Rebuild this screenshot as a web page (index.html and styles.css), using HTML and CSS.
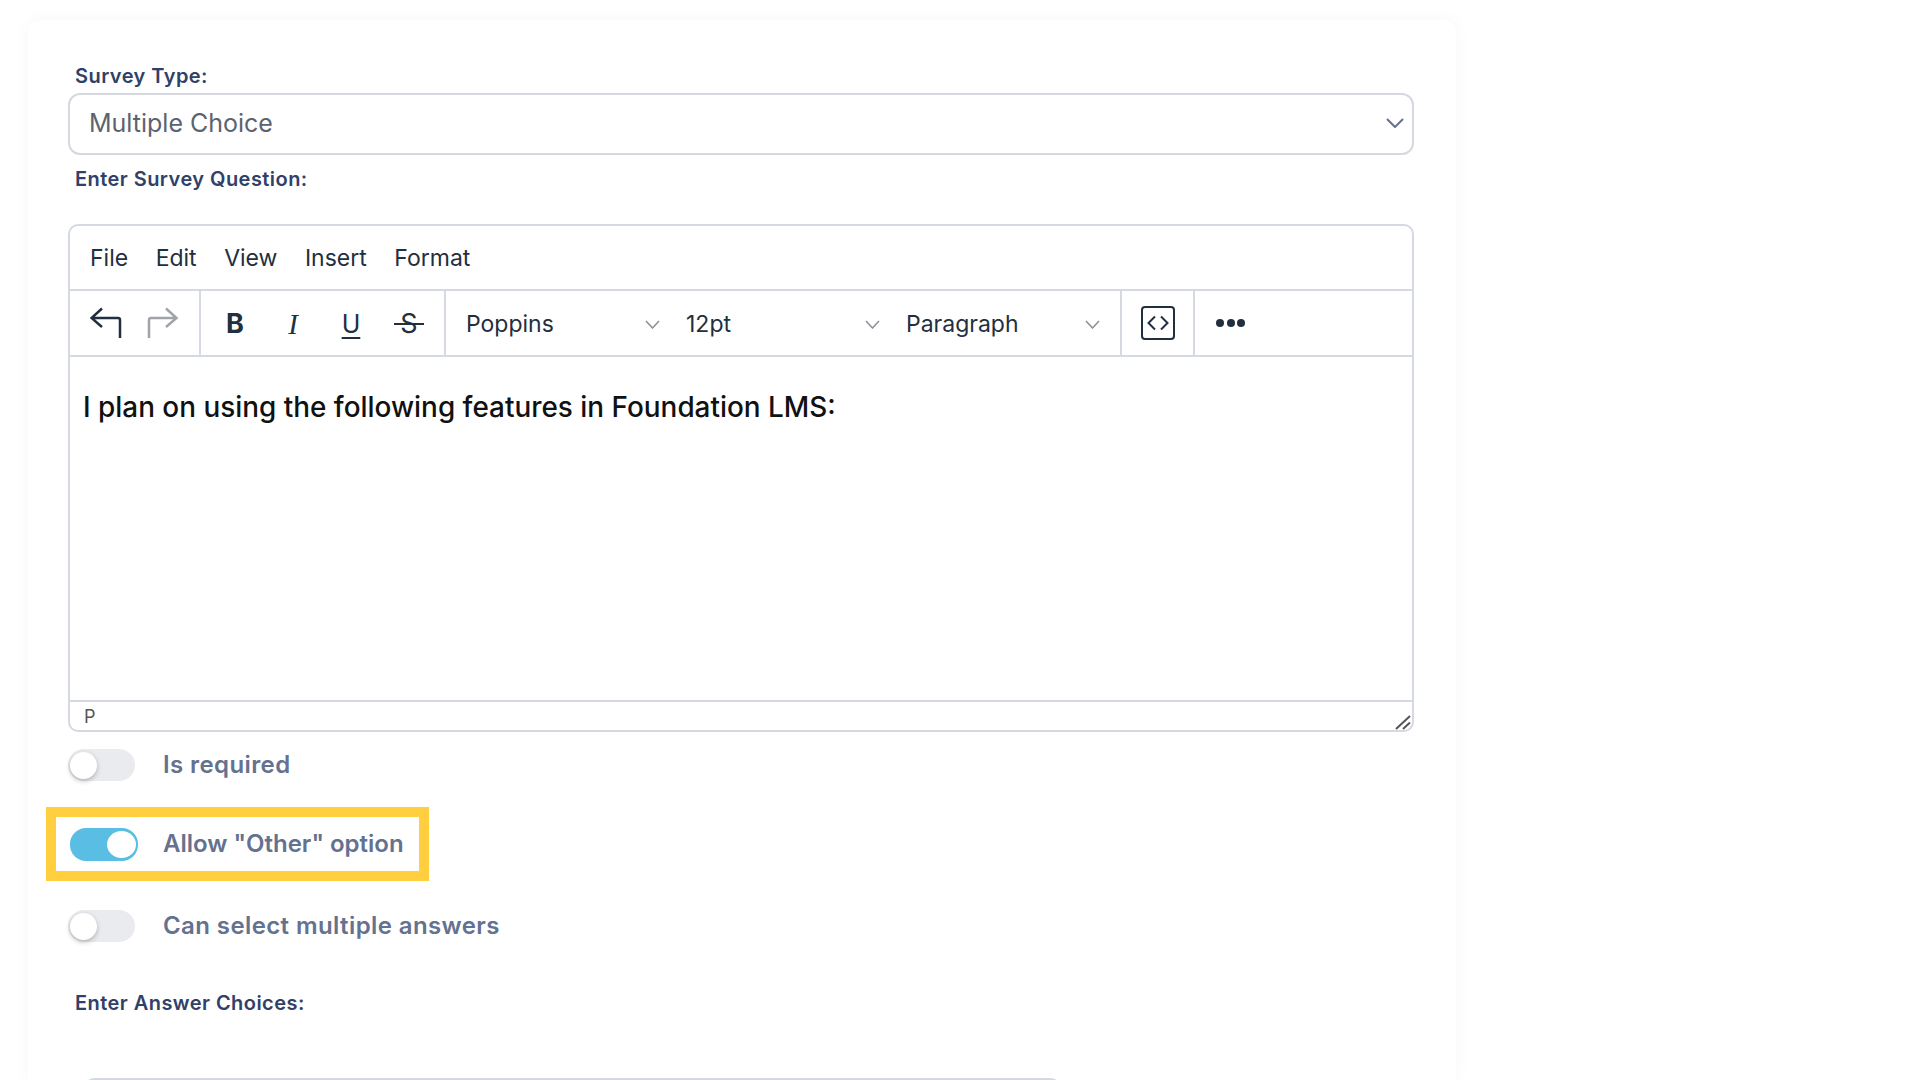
FILE: index.html
```html
<!DOCTYPE html>
<html lang="en">
<head>
  <meta charset="UTF-8">
  <meta name="viewport" content="width=device-width, initial-scale=1.0">
  <title>Survey Question</title>
  <link rel="stylesheet" href="styles.css">
</head>
<body>
  <div class="card">
    <div class="field-label">Survey Type:</div>
    <div class="select-box">
      <span>Multiple Choice</span>
      <svg class="select-chevron" width="18" height="10" viewBox="0 0 18 10"><path d="M1 1l8 8 8-8"/></svg>
    </div>

    <div class="field-label question-label">Enter Survey Question:</div>
    <div class="editor">
      <div class="menu-bar">
        <span>File</span>
        <span>Edit</span>
        <span>View</span>
        <span>Insert</span>
        <span>Format</span>
      </div>
      <div class="tool-bar">
        <div class="tool-group history-group">
          <svg class="tool-icon" width="32" height="32" viewBox="0 0 32 32"><path d="M12 1.5L1.5 11 12 20M1.5 11H28a2 2 0 0 1 2 2v18"/></svg>
          <svg class="tool-icon disabled" width="32" height="32" viewBox="0 0 32 32"><path d="M19 1.5L29.5 11 19 20M29.5 11H4a2 2 0 0 0-2 2v18"/></svg>
        </div>
        <div class="tool-group format-group">
          <span class="format-btn bold">B</span>
          <span class="format-btn italic">I</span>
          <span class="format-btn under">U</span>
          <span class="format-btn strike">S</span>
        </div>
        <div class="tool-group font-group">
          <div class="tool-select">
            <span>Poppins</span>
            <svg width="15" height="9" viewBox="0 0 15 9"><path d="M1 1l6.500 7L14 1"/></svg>
          </div>
          <div class="tool-select">
            <span>12pt</span>
            <svg width="15" height="9" viewBox="0 0 15 9"><path d="M1 1l6.500 7L14 1"/></svg>
          </div>
          <div class="tool-select">
            <span>Paragraph</span>
            <svg width="15" height="9" viewBox="0 0 15 9"><path d="M1 1l6.500 7L14 1"/></svg>
          </div>
        </div>
        <div class="tool-group code-group">
          <svg class="tool-icon" width="34" height="34" viewBox="0 0 34 34"><rect x="1" y="1" width="32" height="32" rx="3"/><path d="M14 10.500L7.500 17l6.500 6.500M20 10.500l6.500 6.500-6.500 6.500"/></svg>
        </div>
        <div class="tool-group more-group">
          <i class="dot"></i><i class="dot"></i><i class="dot"></i>
        </div>
      </div>
      <div class="editor-body">I plan on using the following features in Foundation LMS:</div>
      <div class="status-bar">
        <span>P</span>
        <svg class="resize-grip" width="16" height="15" viewBox="0 0 16 15"><path d="M1 14L15 1M8 14l7-6.500"/></svg>
      </div>
    </div>

    <div class="toggle-row first-row">
      <span class="toggle"><i class="thumb"></i></span>
      <span class="toggle-text">Is required</span>
    </div>
    <div class="toggle-row marked-row">
      <span class="toggle on"><i class="thumb"></i></span>
      <span class="toggle-text">Allow "Other" option</span>
      <div class="highlight"></div>
    </div>
    <div class="toggle-row last-row">
      <span class="toggle"><i class="thumb"></i></span>
      <span class="toggle-text">Can select multiple answers</span>
    </div>

    <div class="field-label answers-label">Enter Answer Choices:</div>
    <div class="answer-box"></div>
  </div>
</body>
</html>
```

FILE: styles.css
```css
/* General Styles */
html, body {
  height: 1080px;
  overflow: hidden;
}

body {
  margin: 0;
  background: #fff;
  font-family: 'Inter', 'Noto Sans', sans-serif;
}

/* Card */
.card {
  width: 1428px;
  height: 1060px;
  margin: 20px 0 0 28px;
  padding: 41px 0 0 40px;
  box-sizing: border-box;
  overflow: hidden;
  background: #fff;
  border-radius: 12px 12px 0 0;
  box-shadow: 0 0 18px rgba(0, 0, 0, 0.035);
}

.field-label {
  height: 30px;
  line-height: 30px;
  margin-left: 7px;
  font-size: 20px;
  font-weight: 600;
  letter-spacing: 0.45px;
  color: #2f4168;
}

.question-label {
  margin-top: 9px;
}

.answers-label {
  margin-top: 45px;
}

/* Survey type select */
.select-box {
  display: flex;
  align-items: center;
  justify-content: space-between;
  width: 1346px;
  height: 62px;
  margin-top: 2px;
  padding: 0 8px 2px 19px;
  box-sizing: border-box;
  border: 2px solid #d5d8de;
  border-radius: 12px;
  font-size: 25px;
  color: #5c6370;
}

.select-chevron path {
  fill: none;
  stroke: #64718f;
  stroke-width: 2;
}

/* Editor */
.editor {
  width: 1346px;
  height: 508px;
  margin-top: 30px;
  box-sizing: border-box;
  border: 2px solid #d5d9e2;
  border-radius: 10px;
  display: flex;
  flex-direction: column;
  color: #222f3e;
}

.menu-bar {
  display: flex;
  align-items: center;
  gap: 27.5px;
  height: 65px;
  padding-left: 20px;
  box-sizing: border-box;
  font-size: 23px;
  border-bottom: 2px solid #d5d9e2;
}

.tool-bar {
  display: flex;
  height: 66px;
  box-sizing: border-box;
  border-bottom: 2px solid #d5d9e2;
}

.tool-group {
  display: flex;
  align-items: center;
  box-sizing: border-box;
  border-right: 2px solid #d5d9e2;
}

.tool-icon {
  flex: none;
  fill: none;
  stroke: #222f3e;
  stroke-width: 2.5;
}

.tool-icon.disabled {
  stroke: #a0a4aa;
}

.history-group {
  width: 131px;
  padding-left: 20px;
  gap: 25px;
}

.format-group {
  width: 245px;
  padding: 2px 0 0 5px;
}

.format-btn {
  width: 58px;
  text-align: center;
  font-size: 27px;
  line-height: 32px;
}

.bold {
  font-weight: 700;
}

.italic {
  font-family: 'Liberation Serif', serif;
  font-style: italic;
  font-size: 29px;
}

.under {
  font-size: 25px;
  line-height: 24px;
  text-decoration: underline;
  text-decoration-thickness: 2px;
  text-underline-offset: 4px;
}

.strike {
  position: relative;
  font-size: 27px;
}

.strike::after {
  content: "";
  position: absolute;
  left: 14px;
  right: 14px;
  top: 15px;
  height: 2px;
  background: #222f3e;
}

.font-group {
  width: 676px;
}

.tool-select {
  display: flex;
  align-items: center;
  justify-content: space-between;
  width: 220px;
  padding: 2px 6px 0 20px;
  box-sizing: border-box;
  font-size: 23px;
}

.tool-select svg path {
  fill: none;
  stroke: #8a8f96;
  stroke-width: 1.5;
}

.code-group {
  width: 73px;
  padding-left: 19px;
}

.code-group .tool-icon {
  stroke-width: 2;
}

.more-group {
  flex: 1;
  padding-left: 21px;
  gap: 2.5px;
  border-right: none;
}

.dot {
  width: 8px;
  height: 8px;
  border-radius: 50%;
  background: #222f3e;
}

.editor-body {
  flex: 1;
  padding: 32px 13px 0;
  font-size: 27.9px;
  font-weight: 500;
  line-height: 36px;
  color: #111;
}

.status-bar {
  position: relative;
  height: 30px;
  box-sizing: border-box;
  padding-left: 14px;
  line-height: 29px;
  font-size: 18px;
  color: #555;
  border-top: 2px solid #d5d9e2;
}

.resize-grip {
  position: absolute;
  right: 1px;
  bottom: 0;
}

.resize-grip path {
  fill: none;
  stroke: #555;
  stroke-width: 2;
}

/* Toggles */
.toggle-row {
  position: relative;
  display: flex;
  align-items: center;
  height: 34px;
}

.first-row {
  margin-top: 16px;
}

.marked-row {
  margin-top: 45px;
}

.last-row {
  margin-top: 48px;
}

.toggle {
  flex: none;
  position: relative;
  width: 67px;
  height: 32px;
  border-radius: 16px;
  background: #e9ebef;
}

.toggle .thumb {
  position: absolute;
  left: 2px;
  top: 3px;
  width: 27px;
  height: 27px;
  border-radius: 50%;
  background: #fff;
  box-shadow: 0 2px 5px rgba(0, 0, 0, 0.25);
}

.toggle.on {
  width: 68px;
  height: 33px;
  margin-left: 2px;
  background: #5abde4;
}

.toggle.on .thumb {
  left: 37px;
  box-shadow: none;
  width: 29px;
  height: 27px;
}

.toggle-text {
  margin: 0 0 2px 28px;
  font-size: 24px;
  font-weight: 600;
  letter-spacing: 0.4px;
  color: #64718f;
}

.marked-row .toggle-text {
  margin-left: 25px;
  letter-spacing: 0;
}

.highlight {
  position: absolute;
  left: -22px;
  top: -20px;
  width: 383px;
  height: 74px;
  box-sizing: border-box;
  border: 10px solid #ffcf40;
}

/* Answer choices */
.answer-box {
  width: 979px;
  height: 60px;
  margin: 60px 0 0 15px;
  box-sizing: border-box;
  border: 2px solid #d5d8de;
  border-radius: 12px;
}
```
